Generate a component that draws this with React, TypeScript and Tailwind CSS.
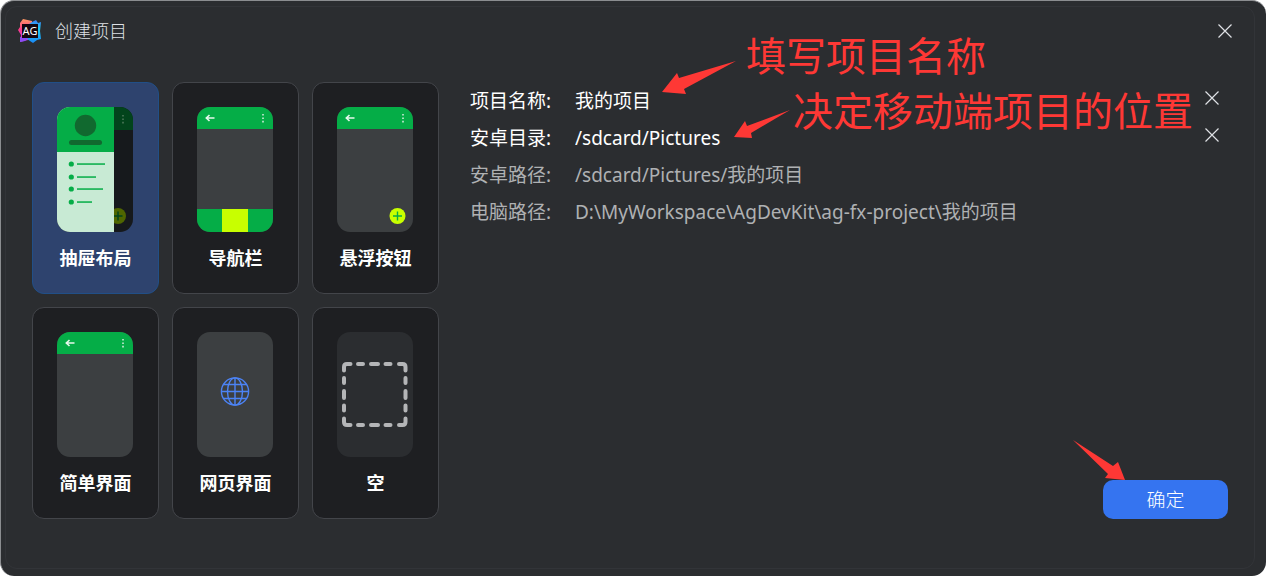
import { useState } from "react";
import type { ReactNode } from "react";

const GREEN = "#05ad47";
const BODY = "#3c3f41";
const LIME = "#c8ff00";

function Phone({ id, fill = BODY, children }: { id: string; fill?: string; children?: ReactNode }) {
  return (
    <svg width="76" height="125" viewBox="0 0 76 125" aria-hidden="true">
      <defs>
        <clipPath id={id}>
          <rect width="76" height="125" rx="13" />
        </clipPath>
      </defs>
      <g clipPath={`url(#${id})`}>
        <rect width="76" height="125" fill={fill} />
        {children}
      </g>
    </svg>
  );
}

function AppBar() {
  return (
    <>
      <rect width="76" height="22" fill={GREEN} />
      <path d="M17.5 11H9.5M12.5 8L9.3 11L12.5 14" fill="none" stroke="#e6f7ec" strokeWidth="1.6" />
      <path d="M65 7h2v1.6h-2zM65 10.4h2v1.6h-2zM65 13.8h2v1.6h-2z" fill="#a5dfbb" />
    </>
  );
}

function DrawerPreview() {
  return (
    <Phone id="drawer" fill="#16191c">
      <rect width="76" height="23" fill="#02441c" />
      <path d="M65 8h2v1.6h-2zM65 11.4h2v1.6h-2zM65 14.8h2v1.6h-2z" fill="#3d6d4d" />
      <circle cx="61" cy="109" r="8" fill="#4f6600" />
      <path d="M61 104.5v9M56.5 109h9" stroke="#02441c" strokeWidth="1.5" />
      <rect width="57" height="125" fill="#c8ead4" />
      <rect width="57" height="45" fill={GREEN} />
      <circle cx="28.5" cy="18.5" r="10.7" fill="#11692f" />
      <rect x="12" y="33" width="33" height="5" rx="2.5" fill="#11692f" />
      {[
        [57, 28],
        [70, 19],
        [82, 26],
        [95, 15],
      ].map(([y, w]) => (
        <g key={y} fill={GREEN}>
          <circle cx="14.3" cy={y} r="2.6" />
          <rect x="20" y={y - 0.7} width={w} height="1.5" />
        </g>
      ))}
    </Phone>
  );
}

function NavPreview() {
  return (
    <Phone id="nav">
      <AppBar />
      <rect y="102" width="76" height="23" fill={GREEN} />
      <rect x="25" y="102" width="26" height="23" fill={LIME} />
    </Phone>
  );
}

function FabPreview() {
  return (
    <Phone id="fab">
      <AppBar />
      <circle cx="60.5" cy="109" r="8" fill={LIME} />
      <path d="M60.5 104.5v9M56 109h9" stroke={GREEN} strokeWidth="1.4" />
    </Phone>
  );
}

function SimplePreview() {
  return (
    <Phone id="simple">
      <AppBar />
    </Phone>
  );
}

function WebPreview() {
  return (
    <Phone id="web">
      <g fill="none" stroke="#4c83f5" strokeWidth="1.4">
        <circle cx="38" cy="59.5" r="13.6" />
        <ellipse cx="38" cy="59.5" rx="7.5" ry="13.6" />
        <path d="M38 46v27M24.5 59.5h27M26.5 52.5h23M26.5 66.5h23" />
      </g>
    </Phone>
  );
}

function EmptyPreview() {
  return (
    <Phone id="empty" fill="#2b2d30">
      <g fill="none" stroke="#b4b5b7" strokeWidth="4" strokeLinecap="round" strokeLinejoin="round">
        <path d="M7 38.5V35Q7 32 10 32H13.5M62 32H65.5Q68.5 32 68.5 35V38.5M68.5 86.5V90Q68.5 93 65.5 93H62M13.5 93H10Q7 93 7 90V86.5" />
        <path d="M21 32h5M34 32h7M48.5 32h5M21 93h5M34 93h7M48.5 93h5" />
        <path d="M7 46v5M7 59v7M7 73.5v5M68.5 46v5M68.5 59v7M68.5 73.5v5" />
      </g>
    </Phone>
  );
}

const templates = [
  { id: "drawer", name: "抽屉布局", preview: <DrawerPreview /> },
  { id: "nav", name: "导航栏", preview: <NavPreview /> },
  { id: "fab", name: "悬浮按钮", preview: <FabPreview /> },
  { id: "simple", name: "简单界面", preview: <SimplePreview /> },
  { id: "web", name: "网页界面", preview: <WebPreview /> },
  { id: "empty", name: "空", preview: <EmptyPreview /> },
];

function Logo() {
  return (
    <svg width="24" height="24" viewBox="0 0 24 24" aria-hidden="true">
      <defs>
        <linearGradient id="logo-left" x1="0" y1="0" x2="0" y2="1">
          <stop offset="0" stopColor="#ff9a62" />
          <stop offset="0.45" stopColor="#ff3a86" />
          <stop offset="1" stopColor="#c23cf0" />
        </linearGradient>
        <linearGradient id="logo-right" x1="0" y1="0" x2="0" y2="1">
          <stop offset="0" stopColor="#3f7cf5" />
          <stop offset="0.4" stopColor="#18d0f5" />
          <stop offset="1" stopColor="#1b86f5" />
        </linearGradient>
      </defs>
      <path d="M5 0L14 2L14 20L10 21L2 23L3 16L0 11L2 8L2 4Z" fill="url(#logo-left)" />
      <path d="M11 5L14 3L18 1L20 4L23 3L22 12L23 20L19 21L15 24L9 20Z" fill="url(#logo-right)" />
      <path d="M2 18L10 19L7 22L2 23Z" fill="#8b4df5" />
      <rect x="4" y="5" width="16" height="14" fill="#14070f" />
      <text x="12" y="16" textAnchor="middle" fontSize="11" fill="#fff" fontFamily="Noto Sans, sans-serif">
        AG
      </text>
    </svg>
  );
}

function Cross() {
  return (
    <svg width="14" height="14" viewBox="0 0 14 14" stroke="#dfe1e5" strokeWidth="1.2" aria-hidden="true">
      <path d="M0.5 0.5L13.5 13.5M13.5 0.5L0.5 13.5" />
    </svg>
  );
}

type FieldProps = { id: string; label: string; value: string; onChange: (value: string) => void };

function Field({ id, label, value, onChange }: FieldProps) {
  return (
    <div className="flex h-[37px] items-center text-white">
      <label htmlFor={id} className="w-[105px] shrink-0">
        {label}
      </label>
      <input
        id={id}
        type="text"
        value={value}
        onChange={(e) => onChange(e.target.value)}
        className="min-w-0 flex-1 bg-transparent outline-none"
      />
      <button type="button" aria-label="清除" onClick={() => onChange("")} className="mr-[9px] pb-1.5">
        <Cross />
      </button>
    </div>
  );
}

function PathRow({ label, value }: { label: string; value: string }) {
  return (
    <div className="flex h-[37px] items-center text-[#afb1b3]">
      <span className="w-[105px] shrink-0">{label}</span>
      <span className="whitespace-nowrap">{value}</span>
    </div>
  );
}

export default function App() {
  const [selected, setSelected] = useState("drawer");
  const [name, setName] = useState("我的项目");
  const [dir, setDir] = useState("/sdcard/Pictures");

  return (
    <div className="flex min-h-screen bg-white font-['Noto_Sans','Noto_Sans_CJK_SC',sans-serif]">
      <div className="flex flex-1 rounded-[14px] border-t border-l border-[#8b8d90] bg-[#2b2d30] pt-[5px] pr-[11px] pb-[7px] pl-1">
        <div className="flex flex-1 flex-col rounded-xl border border-[#323438]">
          {/* Title bar */}
          <header className="flex h-12 shrink-0 items-center pr-[22px] pl-3">
            <Logo />
            <h1 className="ml-[13px] flex-1 text-[18px] leading-6 font-light text-[#dfe1e5]">创建项目</h1>
            <button type="button" aria-label="关闭">
              <Cross />
            </button>
          </header>

          <main className="flex items-stretch pt-[27px] pr-[26px] pl-[26px]">
            {/* Templates */}
            <div role="radiogroup" aria-label="模板" className="grid shrink-0 grid-cols-3 gap-[13px]">
              {templates.map((t) => (
                <label
                  key={t.id}
                  className={`relative flex h-[212px] w-[127px] flex-col items-center rounded-xl border pt-6 pr-px ${
                    selected === t.id ? "border-[#214f87] bg-[#2e436e]" : "border-[#43454a] bg-[#1e1f22]"
                  }`}
                >
                  <input
                    type="radio"
                    name="template"
                    value={t.id}
                    checked={selected === t.id}
                    onChange={() => setSelected(t.id)}
                    className="sr-only"
                  />
                  {t.preview}
                  <span className="mt-3.5 pl-px text-[18px] leading-6 font-bold text-white">{t.name}</span>
                </label>
              ))}
            </div>

            {/* Project settings */}
            <form
              onSubmit={(e) => e.preventDefault()}
              className="relative ml-[31px] flex min-w-0 flex-1 flex-col justify-between text-[19px] leading-7"
            >
              <div>
                <Field id="name" label="项目名称:" value={name} onChange={setName} />
                <Field id="dir" label="安卓目录:" value={dir} onChange={setDir} />
                <PathRow label="安卓路径:" value={`${dir}/${name}`} />
                <PathRow label="电脑路径:" value={`D:\\MyWorkspace\\AgDevKit\\ag-fx-project\\${name}`} />
              </div>
              <div className="relative self-end">
                <button type="submit" className="h-[39px] w-[125px] rounded-[10px] bg-[#3574f0] font-light text-white">
                  确定
                </button>
                <svg
                  className="absolute -top-10 -left-[30px]"
                  width="52"
                  height="40"
                  viewBox="0 0 52 40"
                  fill="#fe3835"
                  aria-hidden="true"
                >
                  <path d="M0 0L40 26L45 22L52 40L32 38L35 34Z" />
                </svg>
              </div>

              {/* Hints */}
              <svg
                className="pointer-events-none absolute -top-[22px] left-[192px]"
                width="130"
                height="80"
                viewBox="0 0 130 80"
                fill="#fe3835"
                aria-hidden="true"
              >
                <path d="M0 32L15 13L17 18L74 1L22 29L24 34Z" />
                <path d="M72 77L83 61L85 66L128 50L89 73L90 78Z" />
              </svg>
              <p className="pointer-events-none absolute -top-[50px] left-[276px] text-[40px] leading-12 whitespace-nowrap text-[#fe3835]">
                填写项目名称
              </p>
              <p className="pointer-events-none absolute top-[5px] left-[323px] text-[40px] leading-12 whitespace-nowrap text-[#fe3835]">
                决定移动端项目的位置
              </p>
            </form>
          </main>
        </div>
      </div>
    </div>
  );
}
